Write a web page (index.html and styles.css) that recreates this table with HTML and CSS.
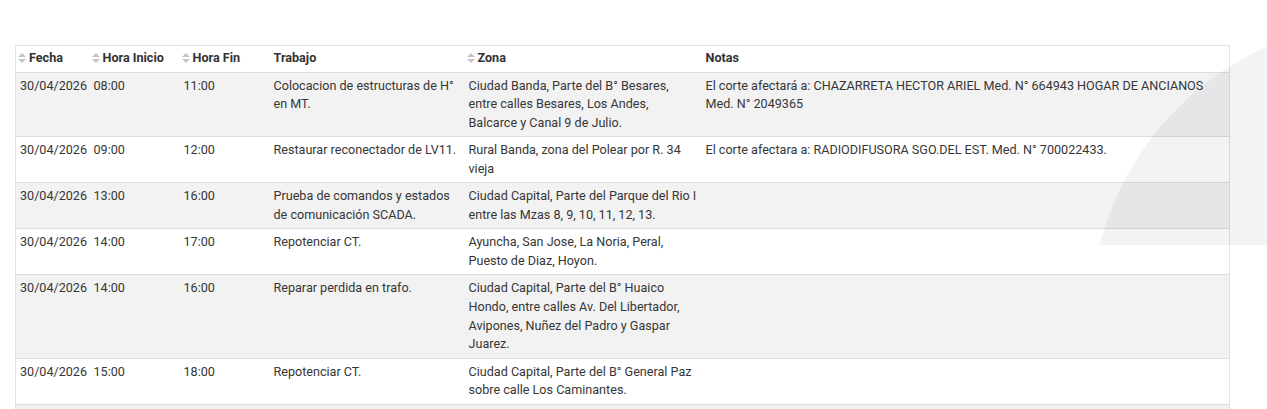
FILE: index.html
```html
<!DOCTYPE html>
<html lang="es">
<head>
<meta charset="utf-8">
<title>Cortes programados</title>
<link rel="stylesheet" href="styles.css">
</head>
<body>
<div class="page">
  <div class="deco" aria-hidden="true"><div class="deco-circle"></div></div>
  <table class="cortes">
    <colgroup>
      <col class="c-fecha"><col class="c-hi"><col class="c-hf"><col class="c-trab"><col class="c-zona"><col class="c-notas">
    </colgroup>
    <thead>
      <tr>
        <th class="sort"><svg class="sort-ico" viewBox="0 0 8 12" width="8" height="12"><polygon points="0,5 4,1 8,5"/><polygon points="0,7 8,7 4,11"/></svg>Fecha</th>
        <th class="sort"><svg class="sort-ico" viewBox="0 0 8 12" width="8" height="12"><polygon points="0,5 4,1 8,5"/><polygon points="0,7 8,7 4,11"/></svg>Hora Inicio</th>
        <th class="sort"><svg class="sort-ico" viewBox="0 0 8 12" width="8" height="12"><polygon points="0,5 4,1 8,5"/><polygon points="0,7 8,7 4,11"/></svg>Hora Fin</th>
        <th>Trabajo</th>
        <th class="sort"><svg class="sort-ico" viewBox="0 0 8 12" width="8" height="12"><polygon points="0,5 4,1 8,5"/><polygon points="0,7 8,7 4,11"/></svg>Zona</th>
        <th>Notas</th>
      </tr>
    </thead>
    <tbody>
      <tr>
        <td>30/04/2026</td><td>08:00</td><td>11:00</td>
        <td>Colocacion de estructuras de H° en MT.</td>
        <td>Ciudad Banda, Parte del B° Besares, entre calles Besares, Los Andes, Balcarce y Canal 9 de Julio.</td>
        <td>El corte afectará a: CHAZARRETA HECTOR ARIEL Med. N° 664943 HOGAR DE ANCIANOS Med. N° 2049365</td>
      </tr>
      <tr>
        <td>30/04/2026</td><td>09:00</td><td>12:00</td>
        <td>Restaurar reconectador de LV11.</td>
        <td>Rural Banda, zona del Polear por R. 34 vieja</td>
        <td>El corte afectara a: RADIODIFUSORA SGO.DEL EST. Med. N° 700022433.</td>
      </tr>
      <tr>
        <td>30/04/2026</td><td>13:00</td><td>16:00</td>
        <td>Prueba de comandos y estados de comunicación SCADA.</td>
        <td>Ciudad Capital, Parte del Parque del Rio I entre las Mzas 8, 9, 10, 11, 12, 13.</td>
        <td></td>
      </tr>
      <tr>
        <td>30/04/2026</td><td>14:00</td><td>17:00</td>
        <td>Repotenciar CT.</td>
        <td>Ayuncha, San Jose, La Noria, Peral, Puesto de Diaz, Hoyon.</td>
        <td></td>
      </tr>
      <tr>
        <td>30/04/2026</td><td>14:00</td><td>16:00</td>
        <td>Reparar perdida en trafo.</td>
        <td>Ciudad Capital, Parte del B° Huaico Hondo, entre calles Av. Del Libertador, Avipones, Nuñez del Padro y Gaspar Juarez.</td>
        <td></td>
      </tr>
      <tr>
        <td>30/04/2026</td><td>15:00</td><td>18:00</td>
        <td>Repotenciar CT.</td>
        <td>Ciudad Capital, Parte del B° General Paz sobre calle Los Caminantes.</td>
        <td></td>
      </tr>
      <tr class="next">
        <td></td><td></td><td></td><td></td><td></td><td></td>
      </tr>
    </tbody>
  </table>
</div>
</body>
</html>
```

FILE: styles.css
```css
html, body {
  margin: 0;
  padding: 0;
  background: #ffffff;
}

body {
  font-family: Roboto, "Liberation Sans", Arial, sans-serif;
  font-size: 12.6px;
  line-height: 18.55px;
  color: #363636;
}

.page {
  position: relative;
  padding: 45px 38px 0 15px;
}

.deco {
  position: absolute;
  left: 0;
  top: 0;
  width: 1267px;
  height: 245px;
  overflow: hidden;
  pointer-events: none;
  z-index: 2;
}

.deco-circle {
  position: absolute;
  left: 1090px;
  top: 20px;
  width: 600px;
  height: 600px;
  border-radius: 50%;
  background: rgba(30, 40, 70, 0.055);
}

.cortes {
  width: 1214px;
  table-layout: fixed;
  border-collapse: collapse;
  border: 1px solid #e2e2e2;
}

.c-fecha { width: 74px; }
.c-hi { width: 90px; }
.c-hf { width: 90px; }
.c-trab { width: 195px; }
.c-zona { width: 237px; }
.c-notas { width: 528px; }

.cortes th,
.cortes td {
  text-align: left;
  vertical-align: top;
  padding: 4px 2px 4px 4px;
}

.cortes th {
  padding-top: 3px;
  font-weight: 700;
  color: #333333;
  background: #ffffff;
  border-bottom: 1px solid #dddddd;
  white-space: nowrap;
}

.cortes th.sort {
  padding-left: 2px;
}

.sort-ico {
  display: inline-block;
  vertical-align: -2px;
  margin-right: 3px;
  fill: #c4c4c4;
}

.cortes td {
  border-top: 1px solid #dddddd;
}

.cortes tbody tr:nth-child(odd) td {
  background: #f2f2f2;
}

.cortes tbody tr:nth-child(even) td {
  background: #ffffff;
}

.cortes tr.next td {
  height: 40px;
}
```
